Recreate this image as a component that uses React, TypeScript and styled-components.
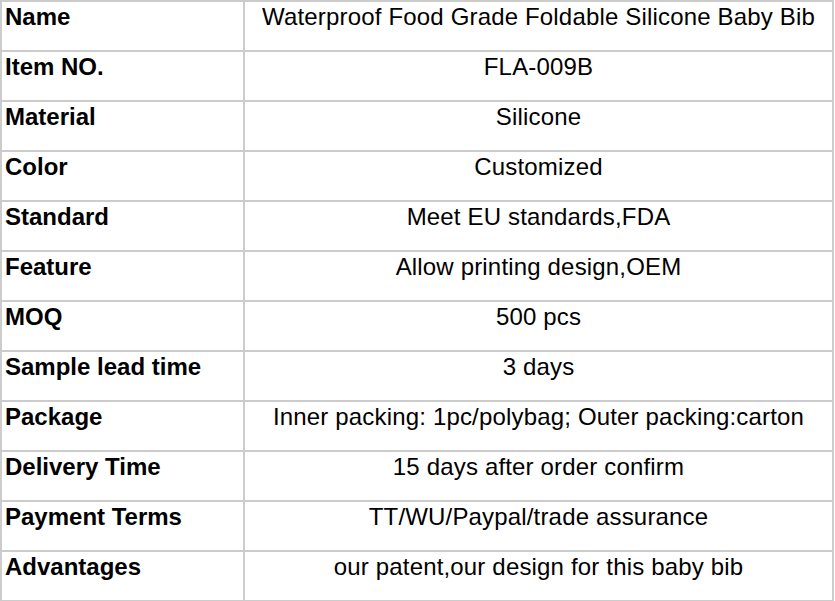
import { Fragment } from "react";
import styled, { createGlobalStyle } from "styled-components";

const GlobalStyle = createGlobalStyle`
  html, body {
    margin: 0;
    padding: 0;
    background: #ffffff;
  }
  body {
    font-family: "Liberation Sans", Arial, sans-serif;
  }
`;

const SpecTable = styled.div`
  display: grid;
  grid-template-columns: 241px 587px;
  grid-auto-rows: 48px;
  gap: 2px;
  padding: 2px;
  width: fit-content;
  background-color: #cccccc;
`;

const Cell = styled.div<{ $label?: boolean }>`
  background-color: #ffffff;
  color: #000000;
  font-size: 24px;
  line-height: 28px;
  padding-top: 1px;
  padding-left: ${({ $label }) => ($label ? "3px" : "0")};
  font-weight: ${({ $label }) => ($label ? 700 : 400)};
  letter-spacing: ${({ $label }) => ($label ? "0" : "0.17px")};
  text-align: ${({ $label }) => ($label ? "left" : "center")};
  white-space: nowrap;
`;

const rows: [string, string][] = [
  ["Name", "Waterproof Food Grade Foldable Silicone Baby Bib"],
  ["Item NO.", "FLA-009B"],
  ["Material", "Silicone"],
  ["Color", "Customized"],
  ["Standard", "Meet EU standards,FDA"],
  ["Feature", "Allow printing design,OEM"],
  ["MOQ", "500 pcs"],
  ["Sample lead time", "3 days"],
  ["Package", "Inner packing: 1pc/polybag; Outer packing:carton"],
  ["Delivery Time", "15 days after order confirm"],
  ["Payment Terms", "TT/WU/Paypal/trade assurance"],
  ["Advantages", "our patent,our design for this baby bib"],
];

export default function App() {
  return (
    <>
      <GlobalStyle />
      <SpecTable>
        {rows.map(([label, value]) => (
          <Fragment key={label}>
            <Cell $label>{label}</Cell>
            <Cell>{value}</Cell>
          </Fragment>
        ))}
      </SpecTable>
    </>
  );
}
